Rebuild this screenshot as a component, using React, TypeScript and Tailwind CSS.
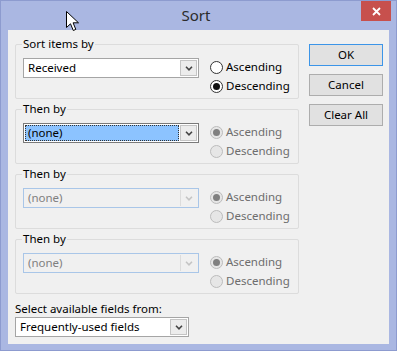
import type { ReactNode } from "react";

type ComboState = "normal" | "selected" | "disabled";

function Chevron({ color }: { color: string }) {
  return (
    <svg width="8" height="5" viewBox="0 0 8 5">
      <path d="M1 0.8 L4 3.8 L7 0.8" stroke={color} strokeWidth="1.6" fill="none" />
    </svg>
  );
}

function Combo({
  value,
  state = "normal",
  width = "w-[176px]",
}: {
  value: string;
  state?: ComboState;
  width?: string;
}) {
  const outer =
    state === "disabled"
      ? "border-[#a9c6e8] bg-[#f0f0f0]"
      : state === "selected"
        ? "border-[#7a7a7a] bg-white"
        : "border-[#a5a5a5] bg-white";

  return (
    <div className={`flex h-[20px] ${width} border p-[1px] ${outer}`}>
      {state === "selected" ? (
        <div className="mr-[1px] flex flex-1 items-center border border-dotted border-[#333] bg-[#8cc3ff] pl-[2px] text-black">
          {value}
        </div>
      ) : (
        <div
          className={`flex flex-1 items-center pl-[3px] ${
            state === "disabled" ? "text-[#7f7f7f]" : "text-black"
          }`}
        >
          {value}
        </div>
      )}
      <div
        className={`flex w-[17px] items-center justify-center ${
          state === "disabled"
            ? "border-l border-[#dcdcdc]"
            : "border border-[#c4c4c4] bg-[#ececec]"
        }`}
      >
        <Chevron color={state === "disabled" ? "#c4c4c4" : "#444"} />
      </div>
    </div>
  );
}

function Radio({
  label,
  checked,
  disabled,
}: {
  label: string;
  checked?: boolean;
  disabled?: boolean;
}) {
  return (
    <div className="flex h-[18px] items-center gap-[3px]">
      <span
        className={`flex h-[13px] w-[13px] items-center justify-center rounded-full border ${
          disabled ? "border-[#bcbcbc] bg-[#e6e6e6]" : "border-[#333] bg-white"
        }`}
      >
        {checked ? (
          <span
            className={`h-[7px] w-[7px] rounded-full ${disabled ? "bg-[#808080]" : "bg-[#111]"}`}
          />
        ) : null}
      </span>
      <span className={disabled ? "text-[#6d6d6d]" : "text-black"}>{label}</span>
    </div>
  );
}

function Group({
  title,
  value,
  state,
  descending,
}: {
  title: string;
  value: string;
  state: ComboState;
  descending?: boolean;
}) {
  const disabled = state !== "normal";
  return (
    <div className="h-[55px] rounded-[2px] border border-[#dcdcdc]">
      <div className="-mt-[9px] ml-[6px] w-fit bg-[#f0f0f0] px-[1px] leading-[16px] text-black">
        {title}
      </div>
      <div className="ml-[7px] mt-[6px] flex items-start">
        <Combo value={value} state={state} />
        <div className="ml-[11px] flex flex-col gap-[1px]">
          <Radio label="Ascending" checked={!descending} disabled={disabled} />
          <Radio label="Descending" checked={descending} disabled={disabled} />
        </div>
      </div>
    </div>
  );
}

function DialogButton({ children, focused }: { children: ReactNode; focused?: boolean }) {
  return (
    <div
      className={`flex h-[22px] items-center justify-center border bg-[#e1e1e1] text-black ${
        focused ? "border-[#3c95e8]" : "border-[#adadad]"
      }`}
    >
      {children}
    </div>
  );
}

export default function App() {
  return (
    <div className="relative h-[353px] w-[397px] bg-white font-['Noto_Sans',sans-serif] text-[11.5px]">
      <div className="flex h-[351px] w-[397px] flex-col border border-[#8d9bcf] bg-[#aab7e2]">
        <div className="flex h-[29px]">
          <div className="flex-1" />
          <div className="pt-[4px] text-[15px] leading-[20px] text-[#2b2b2b]">Sort</div>
          <div className="flex flex-1 justify-end pr-[5px]">
            <div className="flex h-[20px] w-[30px] items-center justify-center bg-[#c7504d]">
              <svg width="9" height="9" viewBox="0 0 9 9">
                <path d="M1 1 L8 8 M8 1 L1 8" stroke="white" strokeWidth="1.8" />
              </svg>
            </div>
          </div>
        </div>

        <div className="mx-[7px] flex h-[314px] bg-[#f0f0f0] pl-[7px] pt-[14px]">
          <div className="flex w-[284px] flex-col">
            <div className="flex flex-col gap-[10px]">
              <Group title="Sort items by" value="Received" state="normal" descending />
              <Group title="Then by" value="(none)" state="selected" />
              <Group title="Then by" value="(none)" state="disabled" />
              <Group title="Then by" value="(none)" state="disabled" />
            </div>
            <div className="mt-[7px] leading-[16px] text-black">Select available fields from:</div>
            <Combo value="Frequently-used fields" width="w-[174px]" />
          </div>

          <div className="ml-[10px] flex w-[74px] flex-col gap-[8px]">
            <DialogButton focused>OK</DialogButton>
            <DialogButton>Cancel</DialogButton>
            <DialogButton>Clear All</DialogButton>
          </div>
        </div>
      </div>

      <svg
        className="absolute left-[66px] top-[11px]"
        width="14"
        height="21"
        viewBox="0 0 14 21"
      >
        <path
          d="M0.5 0.5 L0.5 16.5 L4.5 12.8 L7.3 19.5 L9.8 18.4 L7.1 11.8 L12.5 11.8 Z"
          fill="white"
          stroke="black"
          strokeWidth="1"
          strokeLinejoin="round"
        />
      </svg>
    </div>
  );
}
